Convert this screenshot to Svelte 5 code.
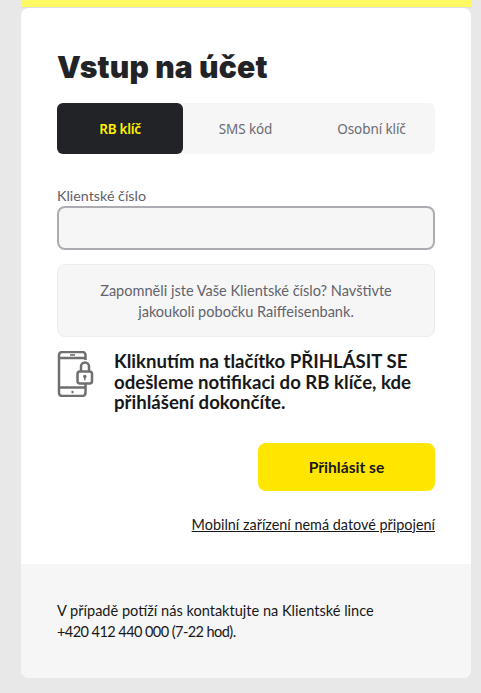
<script>
  const tabs = ['RB klíč', 'SMS kód', 'Osobní klíč'];
</script>

<div class="page">
  <div class="topbar"></div>
  <main class="card">
    <section class="body">
      <h1>Vstup na účet</h1>
      <div class="tabs">
        {#each tabs as t, i}
          <div class="tab" class:active={i === 0}>{t}</div>
        {/each}
      </div>
      <label class="label" for="cn">Klientské číslo</label>
      <input id="cn" class="input" />
      <div class="info">Zapomněli jste Vaše Klientské číslo? Navštivte<br />jakoukoli pobočku Raiffeisenbank.</div>
      <div class="notice">
        <svg class="icon" width="38" height="46" viewBox="0 0 38 46" fill="none" stroke="#6f6f6f" stroke-width="2.500">
          <path d="M28.500 9V4a3 3 0 0 0-3-3H5a3 3 0 0 0-3 3v38a3 3 0 0 0 3 3h20.500a3 3 0 0 0 3-3v-9" />
          <path d="M2 7h26.500M2 36.500h26.500" />
          <path d="M13 4h5" stroke-width="1.600" />
          <path d="M14.500 41h2" stroke-width="2.400" />
          <rect x="20.500" y="20.500" width="14.500" height="12" rx="2.500" />
          <path d="M24 20.500v-5a4 4 0 0 1 8 0v5" />
          <circle cx="27.800" cy="25.500" r="1.800" fill="#6f6f6f" stroke="none" />
          <path d="M27.800 26v3.200" stroke-width="1.500" />
        </svg>
        <p>Kliknutím na tlačítko PŘIHLÁSIT SE odešleme notifikaci do RB klíče, kde přihlášení dokončíte.</p>
      </div>
      <div class="actions">
        <button class="submit">Přihlásit se</button>
        <a class="link" href="#top">Mobilní zařízení nemá datové připojení</a>
      </div>
    </section>
    <footer>V případě potíží nás kontaktujte na Klientské lince<br /><span class="phone">+420 412 440 000 (7-22 hod).</span></footer>
  </main>
</div>

<style>
  :global(body) {
    margin: 0;
    background: #e8e8e8;
    font-family: "Lato", "Noto Sans", sans-serif;
  }
  .page {
    width: 450px;
    margin-left: 21px;
    height: 693px;
    overflow: hidden;
  }
  .topbar {
    height: 7px;
    background: #fff964;
    border-bottom: 1px solid #dedede;
  }
  .card {
    background: #fff;
    border-radius: 8px;
    overflow: hidden;
  }
  .body {
    padding: 41px 36px 0;
    height: 556px;
    box-sizing: border-box;
    display: flex;
    flex-direction: column;
  }
  h1 {
    margin: 0 0 17px;
    font-family: "Inter", sans-serif;
    font-size: 30px;
    font-weight: 900;
    line-height: 37px;
    letter-spacing: 0.2px;
    color: #212326;
  }
  .tabs {
    flex: none;
    display: grid;
    grid-template-columns: 126px 125px 1fr;
    height: 51px;
    background: #f6f6f6;
    border-radius: 6px;
  }
  .tab {
    display: flex;
    align-items: center;
    justify-content: center;
    font-family: "Noto Sans", sans-serif;
    font-size: 13.5px;
    color: #6b6b74;
    letter-spacing: -0.1px;
  }
  .tab.active {
    background: #212326;
    color: #fff200;
    font-weight: 600;
    border-radius: 6px;
    letter-spacing: -0.3px;
  }
  .label {
    margin-top: 33px;
    font-size: 14.3px;
    line-height: 18px;
    color: #5f6069;
  }
  .input {
    flex: none;
    display: block;
    margin: 1px 0 0;
    height: 44px;
    box-sizing: border-box;
    width: 100%;
    border: 2px solid #acacb2;
    border-radius: 8px;
    background: #f6f6f6;
    outline: none;
  }
  .info {
    flex: none;
    margin-top: 14px;
    height: 73px;
    box-sizing: border-box;
    border: 1px solid #ededed;
    border-radius: 8px;
    background: #f6f6f6;
    padding: 15px 10px;
    text-align: center;
    font-size: 14.55px;
    line-height: 21px;
    color: #62636c;
  }
  .notice {
    margin-top: 14px;
    display: flex;
    align-items: flex-start;
    gap: 19px;
  }
  .icon {
    flex: none;
  }
  .notice p {
    margin: 0;
    font-size: 18.6px;
    line-height: 20.5px;
    font-weight: 700;
    color: #17181a;
  }
  .actions {
    display: flex;
    flex-direction: column;
    align-items: flex-end;
  }
  .submit {
    margin-top: 30px;
    width: 177px;
    height: 48px;
    border: none;
    border-radius: 8px;
    background: #ffe600;
    font-family: inherit;
    font-size: 15.6px;
    font-weight: 700;
    color: #17181a;
  }
  .link {
    margin-top: 25px;
    font-size: 14.4px;
    line-height: 18px;
    color: #17181a;
    text-decoration: underline;
  }
  footer {
    height: 114px;
    box-sizing: border-box;
    padding: 36px 36px 0;
    background: #f6f6f6;
    font-size: 14.55px;
    line-height: 21px;
    color: #17181a;
  }
  .phone {
    letter-spacing: -0.58px;
  }
</style>
